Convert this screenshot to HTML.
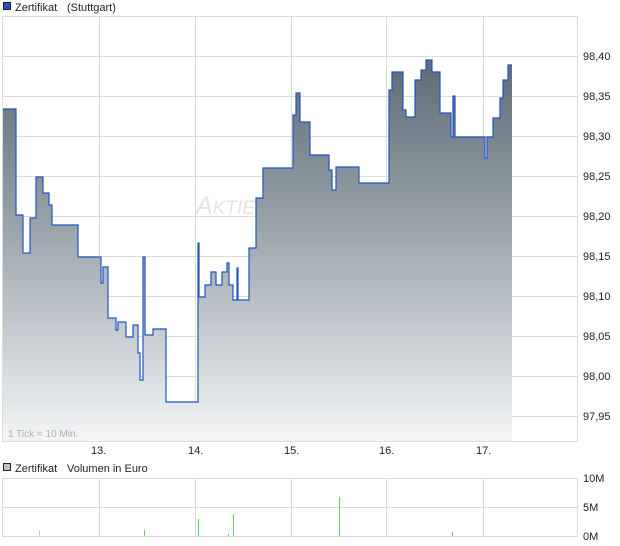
<!DOCTYPE html>
<html><head><meta charset="utf-8"><style>
html,body{margin:0;padding:0;background:#fff;width:620px;height:546px;overflow:hidden}
svg{display:block;font-family:"Liberation Sans",sans-serif}
</style></head><body>
<svg width="620" height="546" viewBox="0 0 620 546" xmlns="http://www.w3.org/2000/svg">
<defs>
<linearGradient id="g" x1="0" y1="56" x2="0" y2="441" gradientUnits="userSpaceOnUse">
<stop offset="0" stop-color="#5c6a74"/>
<stop offset="0.45" stop-color="#9aa5ac"/>
<stop offset="1" stop-color="#f4f5f6"/>
</linearGradient>
</defs>
<rect x="3.5" y="2.5" width="7" height="7" fill="#1f55c0" stroke="#222" stroke-width="1"/>
<text x="15" y="11" font-size="11" fill="#222">Zertifikat</text>
<text x="67" y="11" font-size="11" fill="#222">(Stuttgart)</text>
<g stroke="#dcdcdc" stroke-width="1">
<line x1="2" y1="16.5" x2="578" y2="16.5"/>
<line x1="2" y1="56.5" x2="578" y2="56.5"/>
<line x1="2" y1="96.5" x2="578" y2="96.5"/>
<line x1="2" y1="136.5" x2="578" y2="136.5"/>
<line x1="2" y1="176.5" x2="578" y2="176.5"/>
<line x1="2" y1="216.5" x2="578" y2="216.5"/>
<line x1="2" y1="256.5" x2="578" y2="256.5"/>
<line x1="2" y1="296.5" x2="578" y2="296.5"/>
<line x1="2" y1="336.5" x2="578" y2="336.5"/>
<line x1="2" y1="376.5" x2="578" y2="376.5"/>
<line x1="2" y1="416.5" x2="578" y2="416.5"/>
<line x1="2" y1="441.5" x2="578" y2="441.5"/>
<line x1="2.5" y1="16" x2="2.5" y2="441"/>
<line x1="577.5" y1="16" x2="577.5" y2="441"/>
<line x1="99.5" y1="16" x2="99.5" y2="441"/>
<line x1="195.5" y1="16" x2="195.5" y2="441"/>
<line x1="291.5" y1="16" x2="291.5" y2="441"/>
<line x1="386.5" y1="16" x2="386.5" y2="441"/>
<line x1="483.5" y1="16" x2="483.5" y2="441"/>
</g>
<text x="196" y="214" font-size="25" font-style="italic" fill="#ebe4dd">A<tspan font-size="19">KTIE</tspan></text>
<path fill="url(#g)" stroke="none" d="M3 441 V109 H16 V215 H23 V253 H30 V218 H36 V177 H43 V193 H49 V205 H52 V225 H78 V257 H101 V283 H103 V267 H108 V318 H116 V330 H118 V322 H126 V337 H133 V325 H138 V353 H140 V380 H143 V257 H145 V335 H153 V329 H166 V402 H198 V243 H199 V297 H205 V285 H211 V272 H216 V285 H222 V272 H227 V263 H229 V285 H233 V300 H237 V268 H238 V300 H249 V248 H256 V198 H263 V168 H293 V115 H296 V93 H300 V122 H310 V155 H329 V170 H332 V190 H336 V167 H359 V183 H389 V90 H392 V72 H403 V110 H406 V117 H415 V80 H421 V70 H426 V60 H432 V72 H440 V113 H451 V137 H453 V96 H455 V137 H485 V158 H487 V137 H493 V118 H500 V98 H503 V80 H508 V65 H512 V441 Z"/>
<path fill="none" stroke="#1f55c0" stroke-width="1.2" d="M3 109 H16 V215 H23 V253 H30 V218 H36 V177 H43 V193 H49 V205 H52 V225 H78 V257 H101 V283 H103 V267 H108 V318 H116 V330 H118 V322 H126 V337 H133 V325 H138 V353 H140 V380 H143 V257 H145 V335 H153 V329 H166 V402 H198 V243 H199 V297 H205 V285 H211 V272 H216 V285 H222 V272 H227 V263 H229 V285 H233 V300 H237 V268 H238 V300 H249 V248 H256 V198 H263 V168 H293 V115 H296 V93 H300 V122 H310 V155 H329 V170 H332 V190 H336 V167 H359 V183 H389 V90 H392 V72 H403 V110 H406 V117 H415 V80 H421 V70 H426 V60 H432 V72 H440 V113 H451 V137 H453 V96 H455 V137 H485 V158 H487 V137 H493 V118 H500 V98 H503 V80 H508 V65 H512"/>
<text x="8" y="437" font-size="10" fill="#a8b0b8">1 Tick = 10 Min.</text>
<g font-size="11" fill="#222">
<text x="583" y="60">98,40</text>
<text x="583" y="100">98,35</text>
<text x="583" y="140">98,30</text>
<text x="583" y="180">98,25</text>
<text x="583" y="220">98,20</text>
<text x="583" y="260">98,15</text>
<text x="583" y="300">98,10</text>
<text x="583" y="340">98,05</text>
<text x="583" y="380">98,00</text>
<text x="583" y="420">97,95</text>
<text x="91" y="454">13.</text>
<text x="188" y="454">14.</text>
<text x="284" y="454">15.</text>
<text x="379" y="454">16.</text>
<text x="476" y="454">17.</text>
</g>
<rect x="3.5" y="463.5" width="7" height="7" fill="#c0c0c0" stroke="#222" stroke-width="1"/>
<text x="15" y="472" font-size="11" fill="#222">Zertifikat</text>
<text x="67" y="472" font-size="11" fill="#222">Volumen in Euro</text>
<g stroke="#dcdcdc" stroke-width="1">
<line x1="2" y1="478.5" x2="578" y2="478.5"/>
<line x1="2" y1="507.5" x2="578" y2="507.5"/>
<line x1="2" y1="536.5" x2="578" y2="536.5"/>
<line x1="2.5" y1="478" x2="2.5" y2="537"/>
<line x1="577.5" y1="478" x2="577.5" y2="537"/>
<line x1="99.5" y1="478" x2="99.5" y2="537"/>
<line x1="195.5" y1="478" x2="195.5" y2="537"/>
<line x1="291.5" y1="478" x2="291.5" y2="537"/>
<line x1="386.5" y1="478" x2="386.5" y2="537"/>
<line x1="483.5" y1="478" x2="483.5" y2="537"/>
</g>
<g stroke="#5fd35f" stroke-width="1">
<line x1="39.5" y1="530" x2="39.5" y2="536" stroke="#c8c8c8"/>
<line x1="144.5" y1="530" x2="144.5" y2="536"/>
<line x1="198.5" y1="519" x2="198.5" y2="536"/>
<line x1="228.5" y1="534" x2="228.5" y2="536"/>
<line x1="233.5" y1="514" x2="233.5" y2="536"/>
<line x1="339.5" y1="497" x2="339.5" y2="536"/>
<line x1="452.5" y1="532" x2="452.5" y2="536"/>
</g>
<g font-size="11" fill="#222">
<text x="583" y="482">10M</text>
<text x="583" y="511">5M</text>
<text x="583" y="540">0M</text>
</g>
</svg>
</body></html>
